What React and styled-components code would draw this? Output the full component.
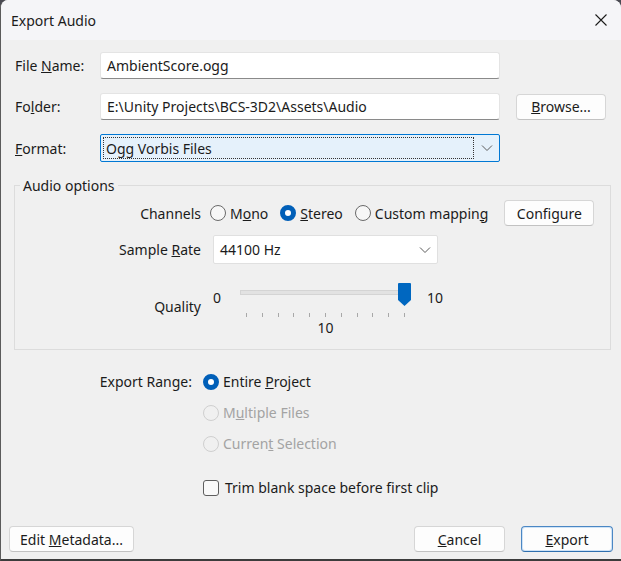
import React from "react";
import styled, { createGlobalStyle } from "styled-components";

const Global = createGlobalStyle`
  html, body {
    margin: 0;
    padding: 0;
    background: #4a4a52;
  }
  body {
    font-family: "Segoe UI", "Noto Sans", "Liberation Sans", sans-serif;
    font-size: 14px;
    color: #1b1b1b;
  }
`;

const Window = styled.div`
  width: 621px;
  height: 561px;
  box-sizing: border-box;
  background: #f0f0f0;
  border-radius: 8px 8px 0 0;
  border-left: 1px solid #5b5b5b;
  border-bottom: 2px solid #3c3c3c;
  overflow: hidden;
  display: flex;
  flex-direction: column;
`;

const TitleBar = styled.div`
  height: 40px;
  flex: none;
  background: #f5f5f8;
  display: flex;
  align-items: center;
  justify-content: space-between;
  padding: 0 14px 0 10px;
  font-size: 14px;
`;

const CloseIcon = () => (
  <svg width="12" height="12" viewBox="0 0 12 12">
    <path d="M0.5 0.5 L11.5 11.5 M11.5 0.5 L0.5 11.5" stroke="#1b1b1b" strokeWidth="1.1" />
  </svg>
);

const Body = styled.div`
  flex: 1;
  display: flex;
  flex-direction: column;
  padding: 12px 8px 8px 12px;
`;

const FileGrid = styled.div`
  display: grid;
  grid-template-columns: 72px 400px 90px;
  column-gap: 13px;
  row-gap: 14px;
  align-items: center;
  padding-left: 2px;
`;

const Label = styled.div`
  white-space: nowrap;
  text-align: ${(p) => (p.right ? "right" : "left")};
  color: ${(p) => (p.disabled ? "#a3a3a3" : "#1b1b1b")};
`;

const QualityLabel = styled(Label)`
  align-self: start;
  padding-top: 24px;
`;

const TextBox = styled.div`
  height: 27px;
  box-sizing: border-box;
  background: #ffffff;
  border: 1px solid #e4e4e4;
  border-bottom-color: #8a8a8a;
  border-radius: 3px;
  display: flex;
  align-items: center;
  padding: 0 6px;
  white-space: nowrap;
`;

const Combo = styled.div`
  height: ${(p) => (p.focused ? "28px" : "29px")};
  box-sizing: border-box;
  background: ${(p) => (p.focused ? "#e5f1fb" : "#ffffff")};
  border: 1px solid ${(p) => (p.focused ? "#0078d4" : "#e0e0e0")};
  border-radius: 2px;
  display: flex;
  align-items: center;
  justify-content: space-between;
  padding: 0 6px 0 2px;
  width: ${(p) => p.width || "auto"};
  margin-left: ${(p) => p.offset || "0"};
  white-space: nowrap;
`;

const FocusRect = styled.span`
  flex: 1;
  align-self: stretch;
  margin: 2px 7px 2px 0;
  border: 1px dotted #333;
  display: flex;
  align-items: center;
  padding-left: 2px;
`;

const ComboText = styled.span`
  padding-left: 4px;
`;

const Chevron = () => (
  <svg width="12" height="8" viewBox="0 0 12 8">
    <path d="M1 1.5 L6 6.5 L11 1.5" fill="none" stroke="#5c5c5c" strokeWidth="1" />
  </svg>
);

const Button = styled.div`
  height: 26px;
  box-sizing: border-box;
  width: ${(p) => p.width};
  margin-left: ${(p) => p.offset || "0"};
  background: #fdfdfd;
  border: 1px solid ${(p) => (p.primary ? "#4b87c4" : "#d6d6d6")};
  border-bottom-color: ${(p) => (p.primary ? "#2f6fae" : "#c2c2c2")};
  box-shadow: ${(p) => (p.primary ? "inset 0 0 0 1px #cfe3f6" : "none")};
  border-radius: 4px;
  display: flex;
  align-items: center;
  justify-content: center;
  white-space: nowrap;
`;

const Group = styled.fieldset`
  margin: 14px 2px 0 1px;
  padding: 0 8px 10px 0;
  border: 1px solid #dcdcdc;
  border-radius: 0;
  height: 174px;
  box-sizing: border-box;
`;

const Legend = styled.legend`
  margin-left: 5px;
  padding: 0 3px;
  font-size: 14px;
`;

const OptionsGrid = styled.div`
  display: grid;
  grid-template-columns: 186px auto;
  column-gap: 9px;
  row-gap: 9px;
  align-items: center;
  margin-top: 5px;
`;

const RadioRow = styled.div`
  display: flex;
  align-items: center;
  gap: 12px;
`;

const Choice = styled.label`
  display: flex;
  align-items: center;
  gap: ${(p) => p.gap || "4px"};
  margin-top: ${(p) => p.top || "0"};
  white-space: nowrap;
  color: ${(p) => (p.disabled ? "#a3a3a3" : "#1b1b1b")};
`;

const RadioDot = styled.span`
  width: 16px;
  height: 16px;
  box-sizing: border-box;
  border-radius: 50%;
  flex: none;
  background: ${(p) => (p.checked ? "#ffffff" : p.disabled ? "#f0f0f0" : "#f7f7f7")};
  border: ${(p) =>
    p.checked ? "5px solid #005fb8" : `1px solid ${p.disabled ? "#cfcfcf" : "#6a6a6a"}`};
`;

const CheckBox = styled.span`
  width: 16px;
  height: 16px;
  box-sizing: border-box;
  border-radius: 3px;
  border: 1px solid #5e5e5e;
  background: #f9f9f9;
  flex: none;
`;

const SliderWrap = styled.div`
  display: grid;
  grid-template-columns: 18px 173px 40px;
  align-items: start;
  column-gap: 7px;
  padding-top: 10px;
  margin-left: 1px;
`;

const SliderEnd = styled.span`
  line-height: 18px;
  padding-top: 6px;
  padding-left: ${(p) => p.indent || "0"};
`;

const SliderBody = styled.div`
  display: flex;
  flex-direction: column;
  align-items: stretch;
`;

const Track = styled.div`
  position: relative;
  height: 24px;
  margin: 0 4px;
`;

const TrackLine = styled.div`
  position: absolute;
  left: 0;
  right: 0;
  top: 7px;
  height: 3px;
  background: #e2e2e2;
  border: 1px solid #d4d4d4;
`;

const Thumb = styled.svg`
  position: absolute;
  right: -6px;
  top: 0;
`;

const Ticks = styled.div`
  display: flex;
  justify-content: space-between;
  margin: 6px 4px 0 10px;
  height: 4px;
`;

const Tick = styled.span`
  width: 1px;
  height: 4px;
  background: #a8a8a8;
`;

const SliderValue = styled.div`
  text-align: center;
  margin-top: 1px;
  padding-left: 6px;
`;

const RangeGrid = styled.div`
  display: grid;
  grid-template-columns: 179px auto;
  column-gap: 11px;
  row-gap: 12px;
  align-items: center;
  margin-top: 22px;
`;

const Spacer = styled.div`
  flex: 1;
`;

const Footer = styled.div`
  display: flex;
  align-items: center;
  gap: 16px;
  margin: 0 0 -1px -4px;
`;

export default function App() {
  return (
    <>
      <Global />
      <Window>
        <TitleBar>
          <span>Export Audio</span>
          <CloseIcon />
        </TitleBar>
        <Body>
          <FileGrid>
            <Label>File <u>N</u>ame:</Label>
            <TextBox>AmbientScore.ogg</TextBox>
            <span />
            <Label>Fo<u>l</u>der:</Label>
            <TextBox>E:\Unity Projects\BCS-3D2\Assets\Audio</TextBox>
            <Button width="90px" offset="3px"><span><u>B</u>rowse...</span></Button>
            <Label><u>F</u>ormat:</Label>
            <Combo focused>
              <FocusRect>Ogg Vorbis Files</FocusRect>
              <Chevron />
            </Combo>
            <span />
          </FileGrid>

          <Group>
            <Legend>Audio options</Legend>
            <OptionsGrid>
              <Label right>Channels</Label>
              <RadioRow>
                <Choice><RadioDot /><span>M<u>o</u>no</span></Choice>
                <Choice><RadioDot checked /><span><u>S</u>tereo</span></Choice>
                <Choice><RadioDot /><span>Custom mappin<u>g</u></span></Choice>
                <Button width="90px" offset="4px">Configure</Button>
              </RadioRow>
              <Label right>Sample <u>R</u>ate</Label>
              <Combo width="225px" offset="3px">
                <ComboText>44100 Hz</ComboText>
                <Chevron />
              </Combo>
              <QualityLabel right>Quality</QualityLabel>
              <SliderWrap>
                <SliderEnd indent="2px">0</SliderEnd>
                <SliderBody>
                  <Track>
                    <TrackLine />
                    <Thumb width="13" height="24" viewBox="0 0 13 24">
                      <path d="M1 0 H12 A1 1 0 0 1 13 1 V17 L6.5 23 L0 17 V1 A1 1 0 0 1 1 0 Z" fill="#0067c0" />
                    </Thumb>
                  </Track>
                  <Ticks>
                    {Array.from({ length: 11 }).map((_, i) => (
                      <Tick key={i} />
                    ))}
                  </Ticks>
                  <SliderValue>10</SliderValue>
                </SliderBody>
                <SliderEnd indent="11px">10</SliderEnd>
              </SliderWrap>
            </OptionsGrid>
          </Group>

          <RangeGrid>
            <Label right>Export Range:</Label>
            <Choice><RadioDot checked /><span>Entire <u>P</u>roject</span></Choice>
            <span />
            <Choice disabled><RadioDot disabled /><span>M<u>u</u>ltiple Files</span></Choice>
            <span />
            <Choice disabled><RadioDot disabled /><span>Curren<u>t</u> Selection</span></Choice>
            <span />
            <Choice top="13px" gap="6px"><CheckBox /><span>Trim blank space before first clip</span></Choice>
          </RangeGrid>

          <Spacer />
          <Footer>
            <Button width="125px"><span>Edit <u>M</u>etadata...</span></Button>
            <Spacer />
            <Button width="91px"><span><u>C</u>ancel</span></Button>
            <Button width="92px" primary><span><u>E</u>xport</span></Button>
          </Footer>
        </Body>
      </Window>
    </>
  );
}
